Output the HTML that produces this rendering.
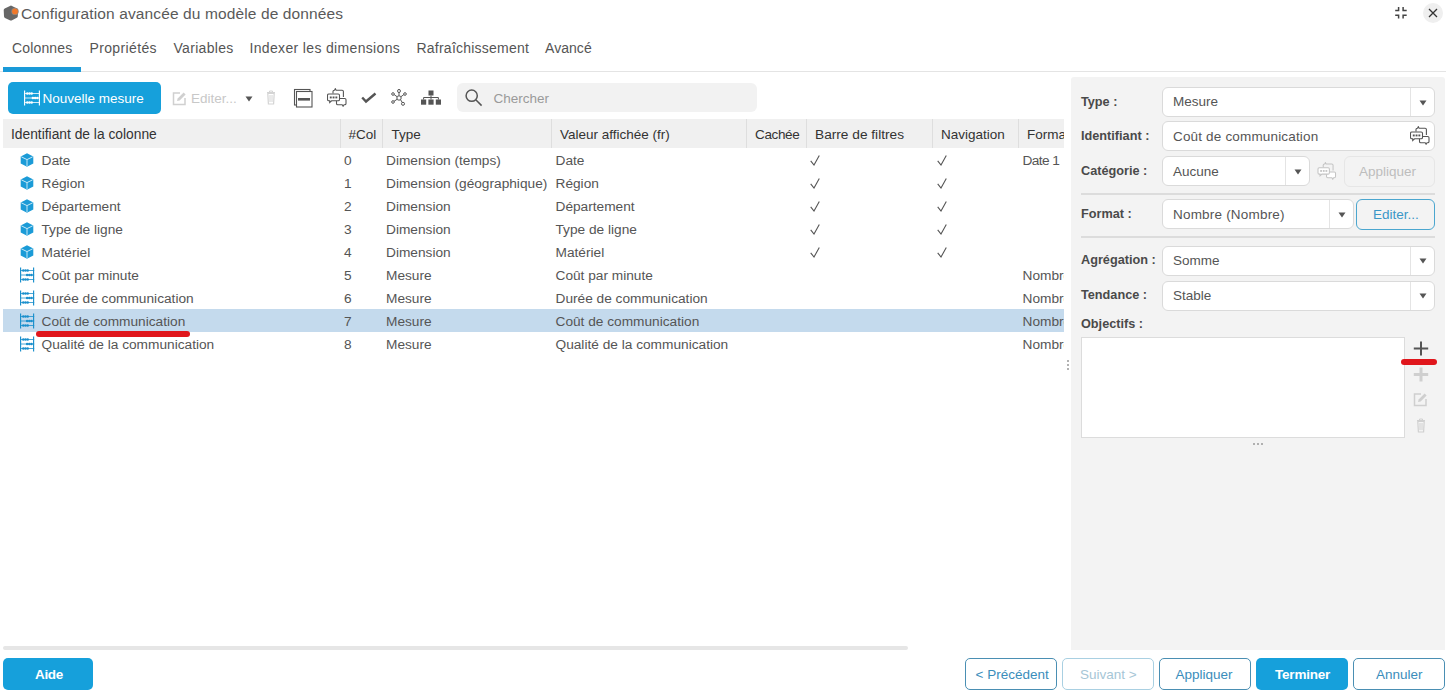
<!DOCTYPE html>
<html><head><meta charset="utf-8"><style>
html,body{margin:0;padding:0;width:1449px;height:692px;overflow:hidden;background:#fff}
body{position:relative;font-family:"Liberation Sans", sans-serif}
.t{position:absolute;white-space:nowrap}
svg{display:block}
</style></head><body>
<svg style="position:absolute;left:3px;top:5px" width="16" height="16" viewBox="0 0 16 16">
<path d="M8 0.6 L14 3.6 Q15 4.2 15 5.5 L14.8 11.3 Q14.7 12.3 13.8 12.8 L8.6 15.4 Q8 15.7 7.3 15.4 L2 12.9 Q1 12.4 1 11.3 L0.7 5 Q0.7 3.9 1.7 3.4 Z" fill="#676767"/>
<circle cx="12" cy="6.4" r="3.7" fill="#8c8580"/>
<circle cx="12" cy="6.4" r="2.9" fill="#f0782a"/></svg>
<div class="t" style="left:21px;top:6.28px;font-size:15.5px;line-height:15.5px;color:#5a5a5a;letter-spacing:0.12px;">Configuration avancée du modèle de données</div>
<svg style="position:absolute;left:1394px;top:6px" width="14" height="14" viewBox="0 0 14 14">
<path d="M4.6 1V4.5H1.2M9.1 1V4.5H12.7M4.6 12.6V9.2H1.2M9.1 12.6V9.2H12.7" fill="none" stroke="#444" stroke-width="1.5"/></svg>
<div style="position:absolute;left:1423px;top:2.5px;width:20px;height:20px;border-radius:50%;background:#efefef"></div>
<svg style="position:absolute;left:1428px;top:8px" width="10" height="10" viewBox="0 0 10 10">
<path d="M1 1L9 9M9 1L1 9" stroke="#333" stroke-width="1.3"/></svg>
<div class="t" style="left:12px;top:40.95px;font-size:14px;line-height:14px;color:#555;letter-spacing:0.15px;">Colonnes</div>
<div class="t" style="left:89.5px;top:40.95px;font-size:14px;line-height:14px;color:#555;letter-spacing:0.36px;">Propriétés</div>
<div class="t" style="left:173.5px;top:40.95px;font-size:14px;line-height:14px;color:#555;letter-spacing:0.3px;">Variables</div>
<div class="t" style="left:249.5px;top:40.95px;font-size:14px;line-height:14px;color:#555;letter-spacing:0.34px;">Indexer les dimensions</div>
<div class="t" style="left:416.5px;top:40.95px;font-size:14px;line-height:14px;color:#555;letter-spacing:0.23px;">Rafraîchissement</div>
<div class="t" style="left:545px;top:40.95px;font-size:14px;line-height:14px;color:#555;letter-spacing:0.05px;">Avancé</div>
<div style="position:absolute;left:0px;top:71px;width:1446px;height:1px;background:#e4e4e4"></div>
<div style="position:absolute;left:3px;top:67px;width:78px;height:4.7px;background:#1a9ad8"></div>
<div style="position:absolute;left:8px;top:82px;width:153px;height:32px;background:#16a0db;border-radius:5px"></div>
<svg style="position:absolute;left:24px;top:90px" width="16" height="16" viewBox="0 0 16 16"><path d="M0.6 0.5v15M15.4 0.5v15" stroke="#fff" stroke-width="1.15"/>
<path d="M1 3.5h15M1 8h15M1 12.5h15" stroke="#fff" stroke-width="0.8"/>
<g fill="#fff"><circle cx="3.3" cy="3.5" r="1.25"/><circle cx="5.5" cy="3.5" r="1.25"/><circle cx="7.7" cy="3.5" r="1.25"/>
<circle cx="8.9" cy="8" r="1.25"/><circle cx="11.1" cy="8" r="1.25"/><circle cx="13.299999999999999" cy="8" r="1.25"/>
<circle cx="3.3" cy="12.5" r="1.25"/><circle cx="5.5" cy="12.5" r="1.25"/><circle cx="7.7" cy="12.5" r="1.25"/></g></svg>
<div class="t" style="left:42.5px;top:92.37px;font-size:13.5px;line-height:13.5px;color:#fff;">Nouvelle mesure</div>
<svg style="position:absolute;left:172px;top:91px" width="15" height="15" viewBox="0 0 15 15"><path d="M8 2H1.5v11.5H13V7" fill="none" stroke="#d0d0d0" stroke-width="1.5"/>
<path d="M5 10l0.6-2.6 6-6 2 2-6 6z" fill="#d0d0d0"/></svg>
<div class="t" style="left:191px;top:91.97px;font-size:13.5px;line-height:13.5px;color:#c8c8c8;">Editer...</div>
<svg style="position:absolute;left:245px;top:96px" width="8" height="6" viewBox="0 0 8 6"><path d="M0.5 0.5h7L4 5.5z" fill="#555"/></svg>
<svg style="position:absolute;left:266px;top:90px" width="10" height="15" viewBox="0 0 10 15"><path d="M1 2.5h8M3.5 2.5V1h3v1.5" fill="none" stroke="#d4d4d4" stroke-width="1"/>
<path d="M1.8 3.5h6.4l-0.6 10.5H2.4z" fill="none" stroke="#d4d4d4" stroke-width="1.2"/>
<path d="M4 5v7M6 5v7" stroke="#d4d4d4" stroke-width="1"/></svg>
<svg style="position:absolute;left:293px;top:88px" width="20" height="20" viewBox="0 0 20 20">
<rect x="1.5" y="1.5" width="15.5" height="15.5" fill="none" stroke="#555" stroke-width="1.1"/>
<rect x="3.5" y="3.5" width="15.5" height="15.5" fill="#fff" stroke="#555" stroke-width="1.1"/>
<rect x="5" y="10" width="12" height="2.6" fill="#555"/></svg>
<svg style="position:absolute;left:327px;top:88px" width="20" height="19" viewBox="0 0 20 19"><path d="M6 5.5V3.5q0-1.3 1.3-1.3h0.2l0.8-1.5 0.8 1.5h6q1.3 0 1.3 1.3V9" fill="none" stroke="#555" stroke-width="1.1"/>
<path d="M11.5 10.5h6.2q1.3 0 1.3 1.3v3.6q0 1.3-1.3 1.3h-0.7l-0.9 1.5-0.9-1.5h-4.4q-1.3 0-1.3-1.3V12" fill="#fff" stroke="#555" stroke-width="1.1"/>
<path d="M1.8 6h9.4q1.3 0 1.3 1.3v4.2q0 1.3-1.3 1.3H4.6l-1.9 1.7v-1.7h-0.9q-1.3 0-1.3-1.3V7.3q0-1.3 1.3-1.3z" fill="#fff" stroke="#555" stroke-width="1.1"/>
<g fill="#555"><rect x="2.8" y="8.5" width="1.9" height="1.9"/><rect x="5.6" y="8.5" width="1.9" height="1.9"/><rect x="8.4" y="8.5" width="1.9" height="1.9"/></g></svg>
<svg style="position:absolute;left:361px;top:92px" width="16" height="12" viewBox="0 0 16 12">
<path d="M1.2 5.5L5 9.5 14.5 1.5" fill="none" stroke="#555" stroke-width="2.4"/></svg>
<svg style="position:absolute;left:391px;top:89px" width="16" height="17" viewBox="0 0 16 17">
<g fill="none" stroke="#555" stroke-width="1"><circle cx="8" cy="9" r="2.2"/>
<ellipse cx="8" cy="2" rx="1.4" ry="1.6"/><circle cx="2" cy="5" r="1.3"/><circle cx="14" cy="5" r="1.3"/>
<circle cx="2" cy="13" r="1.3"/><circle cx="12" cy="14.8" r="1.5"/>
<path d="M8 3.6v3.2M3.1 5.6l3.1 2.2M12.9 5.6l-3.1 2.2M3 12.3l3.4-2.2M9.5 10.6l1.8 3"/></g></svg>
<svg style="position:absolute;left:421px;top:90px" width="20" height="15" viewBox="0 0 20 15">
<g fill="#555"><rect x="7.5" y="0.5" width="5" height="5"/><rect x="0" y="9.5" width="5.2" height="5.2"/><rect x="7.4" y="9.5" width="5.2" height="5.2"/><rect x="14.8" y="9.5" width="5.2" height="5.2"/></g>
<path d="M10 5.5v2.5M2.6 9.5V7.5h14.8v2M10 7.5v2" fill="none" stroke="#555" stroke-width="1"/></svg>
<div style="position:absolute;left:457px;top:83px;width:300px;height:29px;background:#f2f2f2;border-radius:6px"></div>
<svg style="position:absolute;left:465px;top:89px" width="18" height="18" viewBox="0 0 18 18">
<circle cx="6.7" cy="6.7" r="5.6" fill="none" stroke="#555" stroke-width="1.5"/>
<path d="M10.8 10.8l5.8 5.8" stroke="#555" stroke-width="1.5"/></svg>
<div class="t" style="left:493.5px;top:92.27px;font-size:13.5px;line-height:13.5px;color:#9a9a9a;">Chercher</div>
<div style="position:absolute;left:3px;top:119px;width:1061px;height:29px;background:#f0f0f0"></div>
<div style="position:absolute;left:340px;top:119px;width:1px;height:29px;background:#dedede"></div>
<div style="position:absolute;left:382px;top:119px;width:1px;height:29px;background:#dedede"></div>
<div style="position:absolute;left:551px;top:119px;width:1px;height:29px;background:#dedede"></div>
<div style="position:absolute;left:746px;top:119px;width:1px;height:29px;background:#dedede"></div>
<div style="position:absolute;left:806px;top:119px;width:1px;height:29px;background:#dedede"></div>
<div style="position:absolute;left:932px;top:119px;width:1px;height:29px;background:#dedede"></div>
<div style="position:absolute;left:1018px;top:119px;width:1px;height:29px;background:#dedede"></div>
<div class="t" style="left:11px;top:128.12px;font-size:13.8px;line-height:13.8px;color:#333;">Identifiant de la colonne</div>
<div class="t" style="left:348.5px;top:128.37px;font-size:13.5px;line-height:13.5px;color:#333;">#Col</div>
<div class="t" style="left:391.5px;top:128.37px;font-size:13.5px;line-height:13.5px;color:#333;">Type</div>
<div class="t" style="left:560px;top:128.37px;font-size:13.5px;line-height:13.5px;color:#333;">Valeur affichée (fr)</div>
<div class="t" style="left:755px;top:128.37px;font-size:13.5px;line-height:13.5px;color:#333;letter-spacing:-0.35px;">Cachée</div>
<div class="t" style="left:815px;top:128.20px;font-size:13.7px;line-height:13.7px;color:#333;">Barre de filtres</div>
<div class="t" style="left:941px;top:128.37px;font-size:13.5px;line-height:13.5px;color:#333;">Navigation</div>
<div style="position:absolute;left:1027px;top:119px;width:37px;height:29px;overflow:hidden"><div class="t" style="left:0;top:9.37px;font-size:13.5px;line-height:13.5px;color:#333">Format</div></div>
<div style="position:absolute;left:3px;top:309px;width:1061px;height:23px;background:#c4daed"></div>
<svg style="position:absolute;left:20px;top:153px" width="14" height="14" viewBox="0 0 14 14">
<path d="M7 0.3L13.3 3.4V10.6L7 13.7 0.7 10.6V3.4Z" fill="#1b9bd7"/>
<path d="M1.3 3.8L7 6.6 12.7 3.8M7 6.6V13.2" fill="none" stroke="#d8f0fb" stroke-width="0.9"/></svg>
<div class="t" style="left:41.5px;top:154.10px;font-size:13.7px;line-height:13.7px;color:#555;">Date</div>
<div class="t" style="left:344px;top:154.10px;font-size:13.7px;line-height:13.7px;color:#555;">0</div>
<div class="t" style="left:386px;top:154.10px;font-size:13.7px;line-height:13.7px;color:#555;">Dimension (temps)</div>
<div class="t" style="left:555.5px;top:154.10px;font-size:13.7px;line-height:13.7px;color:#555;">Date</div>
<svg style="position:absolute;left:810px;top:155px" width="10" height="11" viewBox="0 0 10 11"><path d="M0.7 5.8L4 10 9.3 0.5" fill="none" stroke="#555" stroke-width="1.1"/></svg>
<svg style="position:absolute;left:937px;top:155px" width="10" height="11" viewBox="0 0 10 11"><path d="M0.7 5.8L4 10 9.3 0.5" fill="none" stroke="#555" stroke-width="1.1"/></svg>
<div style="position:absolute;left:1022.5px;top:149px;width:41.5px;height:22px;overflow:hidden"><div class="t" style="left:0;top:5.10px;font-size:13.7px;line-height:13.7px;color:#555;letter-spacing:-0.6px">Date 1</div></div>
<svg style="position:absolute;left:20px;top:176px" width="14" height="14" viewBox="0 0 14 14">
<path d="M7 0.3L13.3 3.4V10.6L7 13.7 0.7 10.6V3.4Z" fill="#1b9bd7"/>
<path d="M1.3 3.8L7 6.6 12.7 3.8M7 6.6V13.2" fill="none" stroke="#d8f0fb" stroke-width="0.9"/></svg>
<div class="t" style="left:41.5px;top:177.10px;font-size:13.7px;line-height:13.7px;color:#555;">Région</div>
<div class="t" style="left:344px;top:177.10px;font-size:13.7px;line-height:13.7px;color:#555;">1</div>
<div class="t" style="left:386px;top:177.10px;font-size:13.7px;line-height:13.7px;color:#555;">Dimension (géographique)</div>
<div class="t" style="left:555.5px;top:177.10px;font-size:13.7px;line-height:13.7px;color:#555;">Région</div>
<svg style="position:absolute;left:810px;top:178px" width="10" height="11" viewBox="0 0 10 11"><path d="M0.7 5.8L4 10 9.3 0.5" fill="none" stroke="#555" stroke-width="1.1"/></svg>
<svg style="position:absolute;left:937px;top:178px" width="10" height="11" viewBox="0 0 10 11"><path d="M0.7 5.8L4 10 9.3 0.5" fill="none" stroke="#555" stroke-width="1.1"/></svg>
<svg style="position:absolute;left:20px;top:199px" width="14" height="14" viewBox="0 0 14 14">
<path d="M7 0.3L13.3 3.4V10.6L7 13.7 0.7 10.6V3.4Z" fill="#1b9bd7"/>
<path d="M1.3 3.8L7 6.6 12.7 3.8M7 6.6V13.2" fill="none" stroke="#d8f0fb" stroke-width="0.9"/></svg>
<div class="t" style="left:41.5px;top:200.10px;font-size:13.7px;line-height:13.7px;color:#555;">Département</div>
<div class="t" style="left:344px;top:200.10px;font-size:13.7px;line-height:13.7px;color:#555;">2</div>
<div class="t" style="left:386px;top:200.10px;font-size:13.7px;line-height:13.7px;color:#555;">Dimension</div>
<div class="t" style="left:555.5px;top:200.10px;font-size:13.7px;line-height:13.7px;color:#555;">Département</div>
<svg style="position:absolute;left:810px;top:201px" width="10" height="11" viewBox="0 0 10 11"><path d="M0.7 5.8L4 10 9.3 0.5" fill="none" stroke="#555" stroke-width="1.1"/></svg>
<svg style="position:absolute;left:937px;top:201px" width="10" height="11" viewBox="0 0 10 11"><path d="M0.7 5.8L4 10 9.3 0.5" fill="none" stroke="#555" stroke-width="1.1"/></svg>
<svg style="position:absolute;left:20px;top:222px" width="14" height="14" viewBox="0 0 14 14">
<path d="M7 0.3L13.3 3.4V10.6L7 13.7 0.7 10.6V3.4Z" fill="#1b9bd7"/>
<path d="M1.3 3.8L7 6.6 12.7 3.8M7 6.6V13.2" fill="none" stroke="#d8f0fb" stroke-width="0.9"/></svg>
<div class="t" style="left:41.5px;top:223.10px;font-size:13.7px;line-height:13.7px;color:#555;">Type de ligne</div>
<div class="t" style="left:344px;top:223.10px;font-size:13.7px;line-height:13.7px;color:#555;">3</div>
<div class="t" style="left:386px;top:223.10px;font-size:13.7px;line-height:13.7px;color:#555;">Dimension</div>
<div class="t" style="left:555.5px;top:223.10px;font-size:13.7px;line-height:13.7px;color:#555;">Type de ligne</div>
<svg style="position:absolute;left:810px;top:224px" width="10" height="11" viewBox="0 0 10 11"><path d="M0.7 5.8L4 10 9.3 0.5" fill="none" stroke="#555" stroke-width="1.1"/></svg>
<svg style="position:absolute;left:937px;top:224px" width="10" height="11" viewBox="0 0 10 11"><path d="M0.7 5.8L4 10 9.3 0.5" fill="none" stroke="#555" stroke-width="1.1"/></svg>
<svg style="position:absolute;left:20px;top:245px" width="14" height="14" viewBox="0 0 14 14">
<path d="M7 0.3L13.3 3.4V10.6L7 13.7 0.7 10.6V3.4Z" fill="#1b9bd7"/>
<path d="M1.3 3.8L7 6.6 12.7 3.8M7 6.6V13.2" fill="none" stroke="#d8f0fb" stroke-width="0.9"/></svg>
<div class="t" style="left:41.5px;top:246.10px;font-size:13.7px;line-height:13.7px;color:#555;">Matériel</div>
<div class="t" style="left:344px;top:246.10px;font-size:13.7px;line-height:13.7px;color:#555;">4</div>
<div class="t" style="left:386px;top:246.10px;font-size:13.7px;line-height:13.7px;color:#555;">Dimension</div>
<div class="t" style="left:555.5px;top:246.10px;font-size:13.7px;line-height:13.7px;color:#555;">Matériel</div>
<svg style="position:absolute;left:810px;top:247px" width="10" height="11" viewBox="0 0 10 11"><path d="M0.7 5.8L4 10 9.3 0.5" fill="none" stroke="#555" stroke-width="1.1"/></svg>
<svg style="position:absolute;left:937px;top:247px" width="10" height="11" viewBox="0 0 10 11"><path d="M0.7 5.8L4 10 9.3 0.5" fill="none" stroke="#555" stroke-width="1.1"/></svg>
<svg style="position:absolute;left:20px;top:267px" width="15" height="16" viewBox="0 0 15 16"><path d="M0.6 0.5v15M13.6 0.5v15" stroke="#1a8fcc" stroke-width="1.15"/>
<path d="M1 3.5h13.2M1 8h13.2M1 12.5h13.2" stroke="#1a8fcc" stroke-width="0.8"/>
<g fill="#1a8fcc"><circle cx="3.3" cy="3.5" r="1.25"/><circle cx="5.5" cy="3.5" r="1.25"/><circle cx="7.7" cy="3.5" r="1.25"/>
<circle cx="7.099999999999999" cy="8" r="1.25"/><circle cx="9.299999999999999" cy="8" r="1.25"/><circle cx="11.499999999999998" cy="8" r="1.25"/>
<circle cx="3.3" cy="12.5" r="1.25"/><circle cx="5.5" cy="12.5" r="1.25"/><circle cx="7.7" cy="12.5" r="1.25"/></g></svg>
<div class="t" style="left:41.5px;top:269.10px;font-size:13.7px;line-height:13.7px;color:#555;">Coût par minute</div>
<div class="t" style="left:344px;top:269.10px;font-size:13.7px;line-height:13.7px;color:#555;">5</div>
<div class="t" style="left:386px;top:269.10px;font-size:13.7px;line-height:13.7px;color:#555;">Mesure</div>
<div class="t" style="left:555.5px;top:269.10px;font-size:13.7px;line-height:13.7px;color:#555;">Coût par minute</div>
<div style="position:absolute;left:1022.5px;top:264px;width:41.5px;height:22px;overflow:hidden"><div class="t" style="left:0;top:5.10px;font-size:13.7px;line-height:13.7px;color:#555;letter-spacing:0px">Nombre (Nombre)</div></div>
<svg style="position:absolute;left:20px;top:290px" width="15" height="16" viewBox="0 0 15 16"><path d="M0.6 0.5v15M13.6 0.5v15" stroke="#1a8fcc" stroke-width="1.15"/>
<path d="M1 3.5h13.2M1 8h13.2M1 12.5h13.2" stroke="#1a8fcc" stroke-width="0.8"/>
<g fill="#1a8fcc"><circle cx="3.3" cy="3.5" r="1.25"/><circle cx="5.5" cy="3.5" r="1.25"/><circle cx="7.7" cy="3.5" r="1.25"/>
<circle cx="7.099999999999999" cy="8" r="1.25"/><circle cx="9.299999999999999" cy="8" r="1.25"/><circle cx="11.499999999999998" cy="8" r="1.25"/>
<circle cx="3.3" cy="12.5" r="1.25"/><circle cx="5.5" cy="12.5" r="1.25"/><circle cx="7.7" cy="12.5" r="1.25"/></g></svg>
<div class="t" style="left:41.5px;top:292.10px;font-size:13.7px;line-height:13.7px;color:#555;">Durée de communication</div>
<div class="t" style="left:344px;top:292.10px;font-size:13.7px;line-height:13.7px;color:#555;">6</div>
<div class="t" style="left:386px;top:292.10px;font-size:13.7px;line-height:13.7px;color:#555;">Mesure</div>
<div class="t" style="left:555.5px;top:292.10px;font-size:13.7px;line-height:13.7px;color:#555;">Durée de communication</div>
<div style="position:absolute;left:1022.5px;top:287px;width:41.5px;height:22px;overflow:hidden"><div class="t" style="left:0;top:5.10px;font-size:13.7px;line-height:13.7px;color:#555;letter-spacing:0px">Nombre (Nombre)</div></div>
<svg style="position:absolute;left:20px;top:313px" width="15" height="16" viewBox="0 0 15 16"><path d="M0.6 0.5v15M13.6 0.5v15" stroke="#1a8fcc" stroke-width="1.15"/>
<path d="M1 3.5h13.2M1 8h13.2M1 12.5h13.2" stroke="#1a8fcc" stroke-width="0.8"/>
<g fill="#1a8fcc"><circle cx="3.3" cy="3.5" r="1.25"/><circle cx="5.5" cy="3.5" r="1.25"/><circle cx="7.7" cy="3.5" r="1.25"/>
<circle cx="7.099999999999999" cy="8" r="1.25"/><circle cx="9.299999999999999" cy="8" r="1.25"/><circle cx="11.499999999999998" cy="8" r="1.25"/>
<circle cx="3.3" cy="12.5" r="1.25"/><circle cx="5.5" cy="12.5" r="1.25"/><circle cx="7.7" cy="12.5" r="1.25"/></g></svg>
<div class="t" style="left:41.5px;top:315.10px;font-size:13.7px;line-height:13.7px;color:#555;">Coût de communication</div>
<div class="t" style="left:344px;top:315.10px;font-size:13.7px;line-height:13.7px;color:#555;">7</div>
<div class="t" style="left:386px;top:315.10px;font-size:13.7px;line-height:13.7px;color:#555;">Mesure</div>
<div class="t" style="left:555.5px;top:315.10px;font-size:13.7px;line-height:13.7px;color:#555;">Coût de communication</div>
<div style="position:absolute;left:1022.5px;top:310px;width:41.5px;height:22px;overflow:hidden"><div class="t" style="left:0;top:5.10px;font-size:13.7px;line-height:13.7px;color:#555;letter-spacing:0px">Nombre (Nombre)</div></div>
<svg style="position:absolute;left:20px;top:336px" width="15" height="16" viewBox="0 0 15 16"><path d="M0.6 0.5v15M13.6 0.5v15" stroke="#1a8fcc" stroke-width="1.15"/>
<path d="M1 3.5h13.2M1 8h13.2M1 12.5h13.2" stroke="#1a8fcc" stroke-width="0.8"/>
<g fill="#1a8fcc"><circle cx="3.3" cy="3.5" r="1.25"/><circle cx="5.5" cy="3.5" r="1.25"/><circle cx="7.7" cy="3.5" r="1.25"/>
<circle cx="7.099999999999999" cy="8" r="1.25"/><circle cx="9.299999999999999" cy="8" r="1.25"/><circle cx="11.499999999999998" cy="8" r="1.25"/>
<circle cx="3.3" cy="12.5" r="1.25"/><circle cx="5.5" cy="12.5" r="1.25"/><circle cx="7.7" cy="12.5" r="1.25"/></g></svg>
<div class="t" style="left:41.5px;top:338.10px;font-size:13.7px;line-height:13.7px;color:#555;">Qualité de la communication</div>
<div class="t" style="left:344px;top:338.10px;font-size:13.7px;line-height:13.7px;color:#555;">8</div>
<div class="t" style="left:386px;top:338.10px;font-size:13.7px;line-height:13.7px;color:#555;">Mesure</div>
<div class="t" style="left:555.5px;top:338.10px;font-size:13.7px;line-height:13.7px;color:#555;">Qualité de la communication</div>
<div style="position:absolute;left:1022.5px;top:333px;width:41.5px;height:22px;overflow:hidden"><div class="t" style="left:0;top:5.10px;font-size:13.7px;line-height:13.7px;color:#555;letter-spacing:0px">Nombre (Nombre)</div></div>
<div style="position:absolute;left:35.5px;top:331px;width:154.5px;height:5.5px;background:#e0161c;border-radius:3px"></div>
<div style="position:absolute;left:1066.5px;top:360px;width:2px;height:2px;background:#999;border-radius:1px"></div>
<div style="position:absolute;left:1066.5px;top:364px;width:2px;height:2px;background:#999;border-radius:1px"></div>
<div style="position:absolute;left:1066.5px;top:368px;width:2px;height:2px;background:#999;border-radius:1px"></div>
<div style="position:absolute;left:3px;top:646px;width:905px;height:4px;background:#e6e6e6;border-radius:2px"></div>
<div style="position:absolute;left:1071px;top:77px;width:374px;height:573px;background:#f3f3f3;border-radius:3px 3px 0 0"></div>
<div class="t" style="left:1081px;top:95.85px;font-size:12.7px;line-height:12.7px;color:#4a4a4a;font-weight:700;">Type :</div>
<div style="position:absolute;left:1162px;top:87px;width:273px;height:30px;background:#fff;border:1px solid #dadada;border-radius:6px;box-sizing:border-box;"></div>
<div style="position:absolute;left:1410px;top:88px;width:1px;height:28px;background:#e4e4e4"></div>
<svg style="position:absolute;left:1419px;top:99.5px" width="8" height="6" viewBox="0 0 8 6"><path d="M0.5 0.5h7L4 5.5z" fill="#555"/></svg>
<div class="t" style="left:1173px;top:95.37px;font-size:13.5px;line-height:13.5px;color:#555;">Mesure</div>
<div class="t" style="left:1081px;top:130.25px;font-size:12.7px;line-height:12.7px;color:#4a4a4a;font-weight:700;">Identifiant :</div>
<div style="position:absolute;left:1162px;top:121px;width:273px;height:30px;background:#fff;border:1px solid #dadada;border-radius:6px;box-sizing:border-box;"></div>
<div class="t" style="left:1173px;top:129.87px;font-size:13.5px;line-height:13.5px;color:#555;letter-spacing:0.17px;">Coût de communication</div>
<svg style="position:absolute;left:1410px;top:126px" width="20" height="19" viewBox="0 0 20 19"><path d="M6 5.5V3.5q0-1.3 1.3-1.3h0.2l0.8-1.5 0.8 1.5h6q1.3 0 1.3 1.3V9" fill="none" stroke="#555" stroke-width="1.1"/>
<path d="M11.5 10.5h6.2q1.3 0 1.3 1.3v3.6q0 1.3-1.3 1.3h-0.7l-0.9 1.5-0.9-1.5h-4.4q-1.3 0-1.3-1.3V12" fill="#fff" stroke="#555" stroke-width="1.1"/>
<path d="M1.8 6h9.4q1.3 0 1.3 1.3v4.2q0 1.3-1.3 1.3H4.6l-1.9 1.7v-1.7h-0.9q-1.3 0-1.3-1.3V7.3q0-1.3 1.3-1.3z" fill="#fff" stroke="#555" stroke-width="1.1"/>
<g fill="#555"><rect x="2.8" y="8.5" width="1.9" height="1.9"/><rect x="5.6" y="8.5" width="1.9" height="1.9"/><rect x="8.4" y="8.5" width="1.9" height="1.9"/></g></svg>
<div class="t" style="left:1081px;top:165.05px;font-size:12.7px;line-height:12.7px;color:#4a4a4a;font-weight:700;">Catégorie :</div>
<div style="position:absolute;left:1162px;top:156px;width:148px;height:30px;background:#fff;border:1px solid #dadada;border-radius:6px;box-sizing:border-box;"></div>
<div style="position:absolute;left:1285px;top:157px;width:1px;height:28px;background:#e4e4e4"></div>
<svg style="position:absolute;left:1294px;top:168.5px" width="8" height="6" viewBox="0 0 8 6"><path d="M0.5 0.5h7L4 5.5z" fill="#555"/></svg>
<div class="t" style="left:1173px;top:164.87px;font-size:13.5px;line-height:13.5px;color:#555;">Aucune</div>
<svg style="position:absolute;left:1317px;top:162px" width="20" height="18" viewBox="0 0 20 19"><path d="M6 5.5V3.5q0-1.3 1.3-1.3h0.2l0.8-1.5 0.8 1.5h6q1.3 0 1.3 1.3V9" fill="none" stroke="#c4c4c4" stroke-width="1.1"/>
<path d="M11.5 10.5h6.2q1.3 0 1.3 1.3v3.6q0 1.3-1.3 1.3h-0.7l-0.9 1.5-0.9-1.5h-4.4q-1.3 0-1.3-1.3V12" fill="#fff" stroke="#c4c4c4" stroke-width="1.1"/>
<path d="M1.8 6h9.4q1.3 0 1.3 1.3v4.2q0 1.3-1.3 1.3H4.6l-1.9 1.7v-1.7h-0.9q-1.3 0-1.3-1.3V7.3q0-1.3 1.3-1.3z" fill="#fff" stroke="#c4c4c4" stroke-width="1.1"/>
<g fill="#c4c4c4"><rect x="2.8" y="8.5" width="1.9" height="1.9"/><rect x="5.6" y="8.5" width="1.9" height="1.9"/><rect x="8.4" y="8.5" width="1.9" height="1.9"/></g></svg>
<div style="position:absolute;left:1343.5px;top:155.5px;width:91.5px;height:31.5px;border:1px solid #e6e6e6;border-radius:6px;box-sizing:border-box"></div>
<div class="t" style="left:1359px;top:165.37px;font-size:13.5px;line-height:13.5px;color:#bdbdbd;">Appliquer</div>
<div style="position:absolute;left:1081px;top:193px;width:354px;height:2px;background:#dcdcdc"></div>
<div class="t" style="left:1081px;top:208.25px;font-size:12.7px;line-height:12.7px;color:#4a4a4a;font-weight:700;">Format :</div>
<div style="position:absolute;left:1162px;top:199px;width:192px;height:30px;background:#fff;border:1px solid #dadada;border-radius:6px;box-sizing:border-box;"></div>
<div style="position:absolute;left:1329px;top:200px;width:1px;height:28px;background:#e4e4e4"></div>
<svg style="position:absolute;left:1338px;top:211.5px" width="8" height="6" viewBox="0 0 8 6"><path d="M0.5 0.5h7L4 5.5z" fill="#555"/></svg>
<div class="t" style="left:1173px;top:207.87px;font-size:13.5px;line-height:13.5px;color:#555;letter-spacing:0.2px;">Nombre (Nombre)</div>
<div style="position:absolute;left:1356px;top:198.5px;width:79px;height:31px;border:1px solid #4ba6cf;border-radius:6px;box-sizing:border-box"></div>
<div class="t" style="left:1373px;top:208.37px;font-size:13.5px;line-height:13.5px;color:#3a97c7;">Editer...</div>
<div style="position:absolute;left:1081px;top:236px;width:354px;height:2px;background:#dcdcdc"></div>
<div class="t" style="left:1081px;top:254.45px;font-size:12.7px;line-height:12.7px;color:#4a4a4a;font-weight:700;">Agrégation :</div>
<div style="position:absolute;left:1162px;top:245.5px;width:273px;height:30px;background:#fff;border:1px solid #dadada;border-radius:6px;box-sizing:border-box;"></div>
<div style="position:absolute;left:1410px;top:246.5px;width:1px;height:28px;background:#e4e4e4"></div>
<svg style="position:absolute;left:1419px;top:258.0px" width="8" height="6" viewBox="0 0 8 6"><path d="M0.5 0.5h7L4 5.5z" fill="#555"/></svg>
<div class="t" style="left:1173px;top:254.37px;font-size:13.5px;line-height:13.5px;color:#555;">Somme</div>
<div class="t" style="left:1081px;top:289.15px;font-size:12.7px;line-height:12.7px;color:#4a4a4a;font-weight:700;">Tendance :</div>
<div style="position:absolute;left:1162px;top:280.5px;width:273px;height:30px;background:#fff;border:1px solid #dadada;border-radius:6px;box-sizing:border-box;"></div>
<div style="position:absolute;left:1410px;top:281.5px;width:1px;height:28px;background:#e4e4e4"></div>
<svg style="position:absolute;left:1419px;top:293.0px" width="8" height="6" viewBox="0 0 8 6"><path d="M0.5 0.5h7L4 5.5z" fill="#555"/></svg>
<div class="t" style="left:1173px;top:289.37px;font-size:13.5px;line-height:13.5px;color:#555;">Stable</div>
<div class="t" style="left:1081px;top:318.05px;font-size:12.7px;line-height:12.7px;color:#4a4a4a;font-weight:700;">Objectifs :</div>
<div style="position:absolute;left:1081px;top:336.5px;width:324px;height:101px;background:#fff;border:1px solid #dcdcdc;box-sizing:border-box"></div>
<svg style="position:absolute;left:1413px;top:341px" width="16" height="15" viewBox="0 0 16 15">
<path d="M8 0.5v14M0.8 7.5h14.4" stroke="#555" stroke-width="2"/></svg>
<div style="position:absolute;left:1401px;top:359px;width:36px;height:5.5px;background:#e0161c;border-radius:3px"></div>
<svg style="position:absolute;left:1413px;top:367px" width="16" height="15" viewBox="0 0 16 15">
<path d="M8 0.5v14M0.8 7.5h14.4" stroke="#cfcfcf" stroke-width="3"/></svg>
<svg style="position:absolute;left:1413px;top:392px" width="15" height="15" viewBox="0 0 15 15"><path d="M8 2H1.5v11.5H13V7" fill="none" stroke="#cfcfcf" stroke-width="1.5"/>
<path d="M5 10l0.6-2.6 6-6 2 2-6 6z" fill="#cfcfcf"/></svg>
<svg style="position:absolute;left:1416px;top:418px" width="10" height="15" viewBox="0 0 10 15"><path d="M1 2.5h8M3.5 2.5V1h3v1.5" fill="none" stroke="#d0d0d0" stroke-width="1"/>
<path d="M1.8 3.5h6.4l-0.6 10.5H2.4z" fill="none" stroke="#d0d0d0" stroke-width="1.2"/>
<path d="M4 5v7M6 5v7" stroke="#d0d0d0" stroke-width="1"/></svg>
<div style="position:absolute;left:1253px;top:443px;width:2px;height:2px;background:#9a9a9a;border-radius:1px"></div>
<div style="position:absolute;left:1257px;top:443px;width:2px;height:2px;background:#9a9a9a;border-radius:1px"></div>
<div style="position:absolute;left:1261px;top:443px;width:2px;height:2px;background:#9a9a9a;border-radius:1px"></div>
<div style="position:absolute;left:3px;top:658px;width:90px;height:32px;background:#16a0db;border-radius:5px"></div>
<div class="t" style="left:35px;top:668.37px;font-size:13.5px;line-height:13.5px;color:#fff;font-weight:700;letter-spacing:-0.35px;">Aide</div>
<div style="position:absolute;left:965px;top:658px;width:92px;height:32px;border:1px solid #4a8fb3;border-radius:5px;box-sizing:border-box;background:#fff"></div>
<div class="t" style="left:975.5px;top:668.37px;font-size:13.5px;line-height:13.5px;color:#3a8dbb;">&lt; Précédent</div>
<div style="position:absolute;left:1062px;top:658px;width:92px;height:32px;border:1px solid #a9d0e2;border-radius:5px;box-sizing:border-box;background:#fff"></div>
<div class="t" style="left:1080px;top:668.37px;font-size:13.5px;line-height:13.5px;color:#a6c6d6;">Suivant &gt;</div>
<div style="position:absolute;left:1159px;top:658px;width:92px;height:32px;border:1px solid #4a8fb3;border-radius:5px;box-sizing:border-box;background:#fff"></div>
<div class="t" style="left:1175.5px;top:668.37px;font-size:13.5px;line-height:13.5px;color:#3a8dbb;">Appliquer</div>
<div style="position:absolute;left:1256px;top:658px;width:92px;height:32px;background:#16a0db;border-radius:5px"></div>
<div class="t" style="left:1275px;top:668.37px;font-size:13.5px;line-height:13.5px;color:#fff;font-weight:700;letter-spacing:-0.2px;">Terminer</div>
<div style="position:absolute;left:1353px;top:658px;width:92px;height:32px;border:1px solid #4a8fb3;border-radius:5px;box-sizing:border-box;background:#fff"></div>
<div class="t" style="left:1376px;top:668.37px;font-size:13.5px;line-height:13.5px;color:#3a8dbb;">Annuler</div>
</body></html>
